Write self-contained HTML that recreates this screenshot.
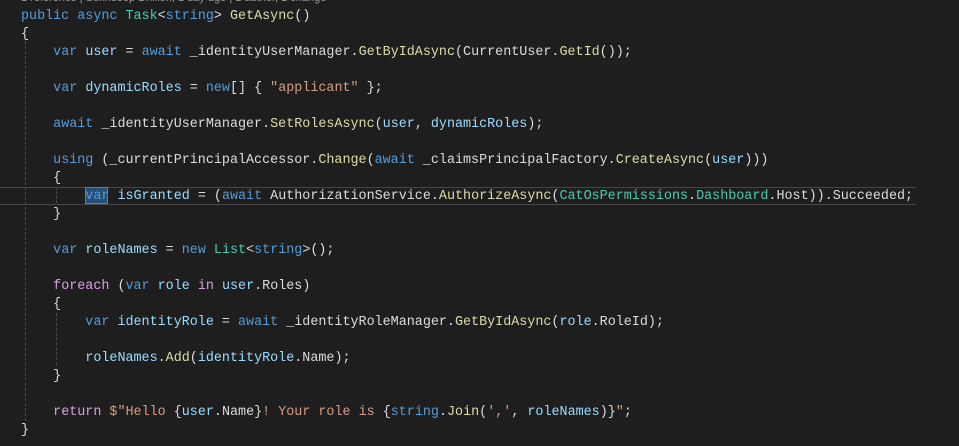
<!DOCTYPE html>
<html><head><meta charset="utf-8"><style>
html,body{margin:0;padding:0;background:#1e1e1e;width:959px;height:446px;overflow:hidden}
.c{position:absolute;left:21px;top:-11px;font-family:"Liberation Mono",monospace;font-size:13.4px;line-height:18px;color:#dcdcdc;white-space:pre}
.k{color:#569cd6}.v{color:#9cdcfe}.m{color:#dcdcaa}.t{color:#4ec9b0}.s{color:#d69d85}.p{color:#d8a0df}
.hdr{color:#999;font-family:"Liberation Sans",sans-serif;font-size:11px}
.g{position:absolute;width:0;border-left:1px dashed #4a4a4a}
.hl{position:absolute;left:0;top:187px;width:916px;height:16px;border-top:1px solid #464646;border-bottom:1px solid #464646}
.sel{position:absolute;left:85px;top:187px;width:23px;height:17px;background:#264f78;border:1px solid #5a7fa8;box-sizing:border-box}
</style></head><body>
<div class="g" style="left:25px;top:41px;height:380px"></div>
<div class="g" style="left:56px;top:187px;height:16px"></div>
<div class="g" style="left:56px;top:313px;height:52px"></div>
<div class="hl"></div><div class="sel"></div>
<div class="c"><span class="hdr">1 reference | Sukhdeep Dhillon, 1 day ago | 1 author, 1 change</span>
<span class="k">public</span> <span class="k">async</span> <span class="t">Task</span>&lt;<span class="k">string</span>&gt; <span class="m">GetAsync</span>()
{
    <span class="k">var</span> <span class="v">user</span> = <span class="k">await</span> _identityUserManager.<span class="m">GetByIdAsync</span>(CurrentUser.<span class="m">GetId</span>());

    <span class="k">var</span> <span class="v">dynamicRoles</span> = <span class="k">new</span>[] { <span class="s">"applicant"</span> };

    <span class="k">await</span> _identityUserManager.<span class="m">SetRolesAsync</span>(<span class="v">user</span>, <span class="v">dynamicRoles</span>);

    <span class="k">using</span> (_currentPrincipalAccessor.<span class="m">Change</span>(<span class="k">await</span> _claimsPrincipalFactory.<span class="m">CreateAsync</span>(<span class="v">user</span>)))
    {
        <span class="k">var</span> <span class="v">isGranted</span> = (<span class="k">await</span> AuthorizationService.<span class="m">AuthorizeAsync</span>(<span class="t">CatOsPermissions</span>.<span class="t">Dashboard</span>.Host)).Succeeded;
    }

    <span class="k">var</span> <span class="v">roleNames</span> = <span class="k">new</span> <span class="t">List</span>&lt;<span class="k">string</span>&gt;();

    <span class="p">foreach</span> (<span class="k">var</span> <span class="v">role</span> <span class="p">in</span> <span class="v">user</span>.Roles)
    {
        <span class="k">var</span> <span class="v">identityRole</span> = <span class="k">await</span> _identityRoleManager.<span class="m">GetByIdAsync</span>(<span class="v">role</span>.RoleId);

        <span class="v">roleNames</span>.<span class="m">Add</span>(<span class="v">identityRole</span>.Name);
    }

    <span class="p">return</span> <span class="s">$"Hello </span>{<span class="v">user</span>.Name}<span class="s">! Your role is </span>{<span class="k">string</span>.<span class="m">Join</span>(<span class="s">','</span>, <span class="v">roleNames</span>)}<span class="s">"</span>;
}</div>
</body></html>
